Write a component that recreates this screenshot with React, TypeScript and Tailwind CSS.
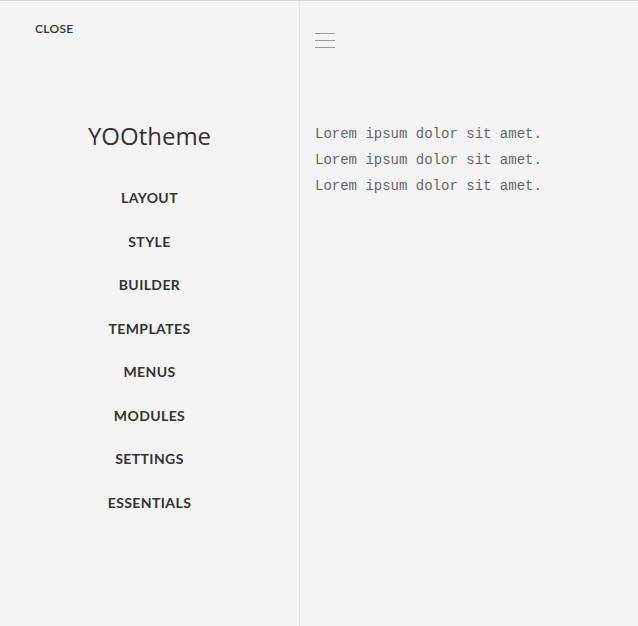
import React from "react";

const menu = [
  "LAYOUT",
  "STYLE",
  "BUILDER",
  "TEMPLATES",
  "MENUS",
  "MODULES",
  "SETTINGS",
  "ESSENTIALS",
];

function App() {
  return (
    <div className="flex h-[626px] w-[638px] border-t border-[#d6d6d6] bg-[#f4f4f4]">
      <aside className="flex w-[300px] shrink-0 flex-col border-r border-[#e6e6e6]">
        <button
          className="ml-[35px] mt-[19px] self-start text-[12px] font-semibold tracking-[0.3px] text-[#333]"
          style={{ fontFamily: "Lato, 'Open Sans', sans-serif" }}
        >
          CLOSE
        </button>

        <h1
          className="mt-[81px] text-center text-[24px] leading-[34px] text-[#333]"
          style={{ fontFamily: "'Open Sans', sans-serif" }}
        >
          YOOtheme
        </h1>

        <nav className="mt-[35px] flex flex-col items-center gap-[23.5px]">
          {menu.map((item) => (
            <a
              key={item}
              href="#"
              className="text-[14px] font-bold leading-[20px] tracking-[0.4px] text-[#333]"
              style={{ fontFamily: "Lato, 'Open Sans', sans-serif" }}
            >
              {item}
            </a>
          ))}
        </nav>
      </aside>

      <main className="flex flex-1 flex-col px-[15px]">
        <button className="mt-[32px] flex w-[20px] flex-col gap-[6px]">
          <span className="h-px w-full bg-[#999]" />
          <span className="h-px w-full bg-[#999]" />
          <span className="h-px w-full bg-[#999]" />
        </button>

        <div
          className="mt-[73px] text-[14px] leading-[26px] text-[#666]"
          style={{ fontFamily: "'Liberation Mono', monospace" }}
        >
          <p>Lorem ipsum dolor sit amet.</p>
          <p>Lorem ipsum dolor sit amet.</p>
          <p>Lorem ipsum dolor sit amet.</p>
        </div>
      </main>
    </div>
  );
}

export default App;
